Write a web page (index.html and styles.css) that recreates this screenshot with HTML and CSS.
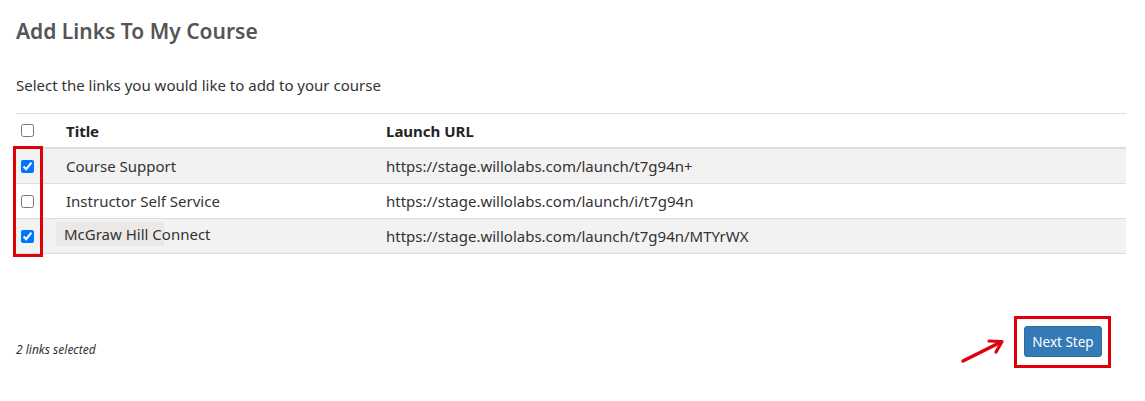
FILE: index.html
```html
<!DOCTYPE html>
<html>
<head>
<meta charset="utf-8">
<link rel="stylesheet" href="styles.css">
</head>
<body>
<div class="page">
  <h2 class="title">Add Links To My Course</h2>
  <p class="lead">Select the links you would like to add to your course</p>
  <div class="table-wrap">
    <table class="links">
      <thead>
        <tr>
          <th class="c-check"><input type="checkbox"></th>
          <th class="c-title">Title</th>
          <th>Launch URL</th>
        </tr>
      </thead>
      <tbody>
        <tr class="odd">
          <td class="c-check"><input type="checkbox" checked></td>
          <td>Course Support</td>
          <td>https://stage.willolabs.com/launch/t7g94n+</td>
        </tr>
        <tr>
          <td class="c-check"><input type="checkbox"></td>
          <td>Instructor Self Service</td>
          <td>https://stage.willolabs.com/launch/i/t7g94n</td>
        </tr>
        <tr class="odd">
          <td class="c-check"><input type="checkbox" checked></td>
          <td><span class="pasted">McGraw Hill Connect</span></td>
          <td>https://stage.willolabs.com/launch/t7g94n/MTYrWX</td>
        </tr>
      </tbody>
    </table>
    <div class="mark mark-checks"></div>
  </div>
  <div class="footer">
    <span class="count">2 links selected</span>
    <div class="btn-area">
      <svg class="arrow" width="50" height="30" viewBox="0 0 50 30">
        <line x1="4" y1="25" x2="42" y2="6" stroke="#e0000a" stroke-width="3.5" stroke-linecap="round"/>
        <polyline points="30,5 43,5.5 37,16" fill="none" stroke="#e0000a" stroke-width="3.2" stroke-linecap="round" stroke-linejoin="round"/>
      </svg>
      <span class="dot"></span>
      <div class="btn-frame">
        <button class="btn">Next Step</button>
      </div>
    </div>
  </div>
</div>
</body>
</html>
```
FILE: styles.css
```css
html, body {
  margin: 0;
  padding: 0;
  background: #fff;
}
body {
  font-family: "Noto Sans", "Open Sans", "Liberation Sans", sans-serif;
  color: #333;
}
.page {
  padding: 0 19px 0 16px;
}
.title {
  margin: 0;
  padding-top: 16px;
  font-size: 21px;
  line-height: 30px;
  font-weight: 600;
  color: #555;
}
.lead {
  margin: 29px 0 0 0;
  font-size: 15px;
  line-height: 20px;
  color: #333;
}
.table-wrap {
  position: relative;
  margin-top: 18px;
}
.links {
  width: 100%;
  border-collapse: collapse;
  font-size: 15px;
  color: #333;
}
.links th, .links td {
  text-align: left;
  padding: 0 8px;
  height: 34px;
  border-top: 1px solid #ddd;
  vertical-align: middle;
  white-space: nowrap;
}
.links th {
  font-weight: 700;
  color: #222;
  height: 33px;
  border-bottom: 2px solid #ddd;
}
.links tbody tr:last-child td {
  border-bottom: 1px solid #ddd;
}
.links tr.odd td {
  background: #f2f2f2;
}
.links .c-check {
  width: 29px;
  padding: 0 8px 0 5px;
}
.links .c-title {
  width: 304px;
}
.links input[type=checkbox] {
  margin: 0;
  width: 13px;
  height: 13px;
  display: block;
}
.pasted {
  background: #ebe8e8;
  padding: 2px 0 2px 8px;
  margin-left: -10px;
  display: inline-block;
  width: 100px;
  white-space: nowrap;
  position: relative;
  top: -2px;
}
.mark {
  position: absolute;
  border: 3px solid #e0000a;
  box-sizing: border-box;
}
.mark-checks {
  left: -3px;
  top: 33px;
  width: 30px;
  height: 111px;
}
.footer {
  display: flex;
  justify-content: space-between;
  align-items: flex-start;
  margin-top: 62px;
}
.count {
  font-style: italic;
  font-size: 12px;
  color: #333;
  margin-top: 25px;
}
.btn-area {
  position: relative;
  display: flex;
  margin-right: 15px;
}
.arrow {
  position: absolute;
  left: -55px;
  top: 20px;
}
.dot {
  position: absolute;
  left: -87px;
  top: 52px;
  width: 1px;
  height: 1px;
  background: #e0000a;
}
.btn-frame {
  border: 3px solid #e0000a;
  padding: 7px 6px 8px 7px;
}
.btn {
  font-family: "Noto Sans", "Open Sans", sans-serif;
  font-size: 13.5px;
  color: #fff;
  background: #337ab7;
  border: 1px solid #2e6da4;
  border-radius: 3px;
  width: 78px;
  height: 31px;
  padding: 0;
  cursor: pointer;
}
```
